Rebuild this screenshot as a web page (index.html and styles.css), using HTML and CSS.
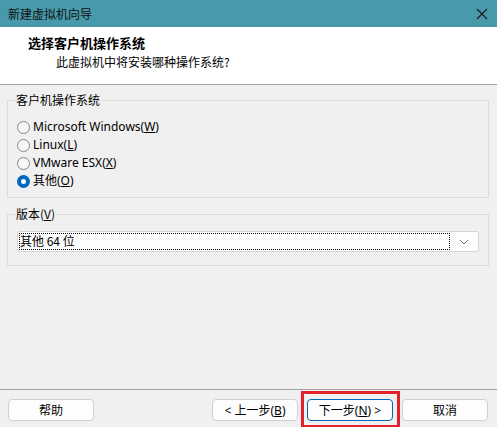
FILE: index.html
```html
<!DOCTYPE html>
<html lang="zh-CN">
<head>
  <meta charset="utf-8">
  <title>新建虚拟机向导</title>
  <link rel="stylesheet" href="styles.css">
</head>
<body>
  <div class="wizard">
    <div class="titlebar">
      <span class="title">新建虚拟机向导</span>
      <svg class="close" width="12" height="12" viewBox="0 0 12 12">
        <path d="M1 1 L11 11 M11 1 L1 11" stroke="#1a1a1a" stroke-width="1.1" fill="none"/>
      </svg>
    </div>

    <div class="header">
      <div class="heading">选择客户机操作系统</div>
      <div class="subheading">此虚拟机中将安装哪种操作系统?</div>
    </div>

    <div class="body">
      <fieldset class="group guest">
        <legend>客户机操作系统</legend>
        <label class="radio"><span class="dot"></span><span>Microsoft Windows(<u>W</u>)</span></label>
        <label class="radio"><span class="dot"></span><span>Linux(<u>L</u>)</span></label>
        <label class="radio"><span class="dot"></span><span>VMware ESX(<u>X</u>)</span></label>
        <label class="radio checked"><span class="dot"></span><span>其他(<u>O</u>)</span></label>
      </fieldset>

      <fieldset class="group version">
        <legend>版本(<u>V</u>)</legend>
        <div class="combo">
          <span class="combo-text">其他 64 位</span>
          <svg class="chevron" width="10" height="6" viewBox="0 0 10 6">
            <path d="M1 1 L5 5 L9 1" stroke="#707070" stroke-width="1" fill="none"/>
          </svg>
        </div>
      </fieldset>
    </div>

    <div class="footer">
      <button class="btn">帮助</button>
      <div class="nav">
        <button class="btn">&lt; 上一步(<u>B</u>)</button>
        <button class="btn primary">下一步(<u>N</u>) &gt;</button>
        <button class="btn">取消</button>
      </div>
      <div class="mark"></div>
    </div>
  </div>
</body>
</html>
```

FILE: styles.css
```css
* {
    margin: 0;
    padding: 0;
    box-sizing: border-box;
}

body {
    width: 497px;
    height: 427px;
    overflow: hidden;
    background: #f0f0f0;
    font-family: "Noto Sans", "Noto Sans CJK SC", sans-serif;
    font-size: 12px;
    color: #000;
}

.wizard {
    height: 427px;
    display: flex;
    flex-direction: column;
}

/* window caption */
.titlebar {
    height: 27px;
    background: #4799ab;
    display: flex;
    align-items: center;
    justify-content: space-between;
    padding: 0 9px 0 8px;
}

.title {
    font-family: "Noto Sans CJK SC", sans-serif;
    font-size: 12px;
    color: #111;
    line-height: 16px;
}

/* white banner with the step title */
.header {
    height: 58px;
    background: #fff;
    border-bottom: 1px solid #a0a0a0;
    padding: 7px 0 0 28px;
    font-family: "Noto Sans CJK SC", sans-serif;
}

.heading {
    font-size: 13px;
    font-weight: bold;
    line-height: 18px;
}

.subheading {
    padding-left: 28px;
    font-size: 12px;
    line-height: 18px;
    margin-top: 1px;
}

.body {
    padding: 7px 8px 0 7px;
}

.group {
    border: 1px solid #dcdcdc;
    padding: 0 9px;
    width: 482px;
}

.group legend {
    font-family: "Noto Sans CJK SC", sans-serif;
    line-height: 16px;
    padding: 0 1px;
    margin-left: -2px;
}

.guest {
    height: 106px;
    padding-top: 10px;
}

.radio {
    display: flex;
    align-items: center;
    height: 18px;
    gap: 3px;
    line-height: 16px;
}

.dot {
    width: 13px;
    height: 13px;
    border-radius: 50%;
    border: 1px solid #858585;
    background: #f7f7f7;
    flex: none;
}

.checked .dot {
    border: 4px solid #0067c0;
    background: #fff;
}

.version {
    margin-top: 8px;
    height: 60px;
    padding-top: 9px;
}

.combo {
    height: 21px;
    width: 462px;
    background: #fdfdfd;
    border: 1px solid #d5d5d5;
    border-radius: 2px;
    display: flex;
    align-items: center;
    justify-content: space-between;
    padding: 1px 9px 1px 1px;
}

.combo-text {
    flex: 1;
    height: 17px;
    line-height: 15px;
    padding-left: 1px;
    outline: 1px dotted #000;
    outline-offset: -1px;
    margin-right: 9px;
    font-family: "Noto Sans CJK SC", sans-serif;
}

/* button strip */
.footer {
    margin-top: auto;
    height: 38px;
    border-top: 1px solid #a0a0a0;
    display: flex;
    justify-content: space-between;
    align-items: flex-start;
    padding: 9px 9px 0 8px;
    position: relative;
}

.nav {
    display: flex;
    gap: 9px;
}

.btn {
    width: 86px;
    height: 22px;
    background: #fdfdfd;
    border: 1px solid #d0d0d0;
    border-radius: 4px;
    font-family: "Noto Sans", "Noto Sans CJK SC", sans-serif;
    font-size: 12px;
    color: #000;
}

.primary {
    border-color: #0067c0;
}

/* red highlight drawn around the next button */
.mark {
    position: absolute;
    left: 301px;
    top: 1px;
    width: 99px;
    height: 37px;
    border: 3px solid #e3202b;
}
```
